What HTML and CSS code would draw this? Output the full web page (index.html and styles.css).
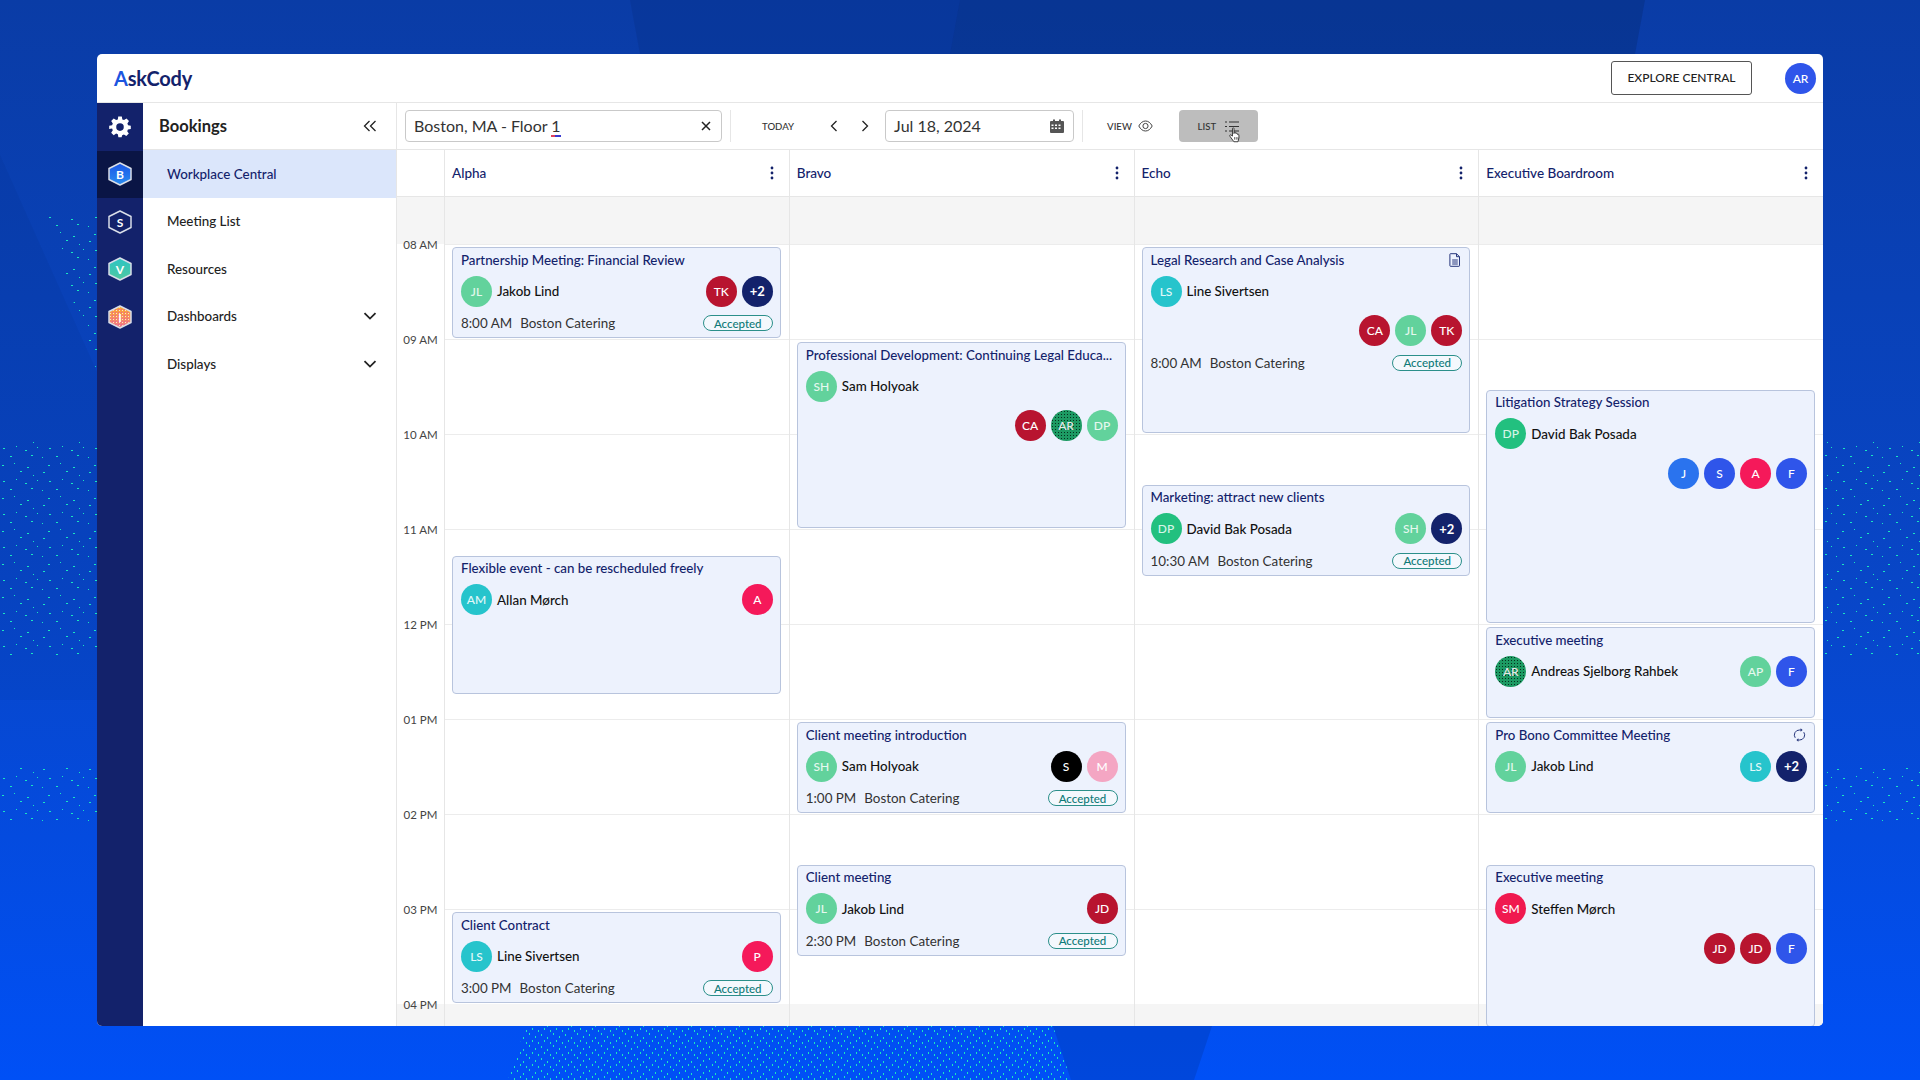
FILE: index.html
```html
<!DOCTYPE html>
<html lang="en">
<head>
    <meta charset="UTF-8">
    <meta name="viewport" content="width=device-width, initial-scale=1.0">
    <title>AskCody Workplace Central</title>
    <link rel="stylesheet" href="styles.css">
</head>
<body>

    <!-- Backdrop: faint polygons and dotted patches behind the window -->
    <svg class="backdrop" width="1920" height="1080" viewBox="0 0 1920 1080">
        <defs>
            <pattern id="dots" width="46" height="33" patternUnits="userSpaceOnUse">
                <g fill="#19e6c0">
                    <rect x="2" y="3" width="2" height="1"/><rect x="14" y="1" width="1" height="1"/>
                    <rect x="27" y="5" width="2" height="1"/>
                    <rect x="20" y="9" width="2" height="1"/>
                    <rect x="33" y="13" width="1" height="1"/><rect x="43" y="10" width="2" height="1"/>
                    <rect x="3" y="19" width="2" height="1"/><rect x="16" y="17" width="1" height="1"/>
                    <rect x="25" y="21" width="2" height="1"/><rect x="37" y="18" width="1" height="1"/>
                    <rect x="10" y="27" width="2" height="1"/>
                    <rect x="31" y="26" width="2" height="1"/><rect x="42" y="28" width="1" height="1"/>
                </g>
            </pattern>
            <pattern id="dotsDense" width="24" height="12" patternUnits="userSpaceOnUse">
                <g fill="#19e6c0">
                    <rect x="1" y="1" width="1" height="2"/><rect x="7" y="4" width="1" height="2"/>
                    <rect x="13" y="2" width="1" height="2"/><rect x="19" y="5" width="1" height="2"/>
                    <rect x="4" y="8" width="1" height="2"/><rect x="10" y="10" width="1" height="2"/>
                    <rect x="16" y="8" width="1" height="2"/><rect x="22" y="10" width="1" height="2"/>
                </g>
            </pattern>
        </defs>
        <polygon points="630,0 960,0 950,54 640,54" fill="#00163f" opacity="0.1"/>
        <polygon points="960,0 1645,0 1635,54 950,54" fill="#00163f" opacity="0.18"/>
        <polygon points="0,155 97,372 97,700 0,700" fill="#00163f" opacity="0.05"/>
        <polygon points="1053,1026 1212,1026 1194,1080 1071,1080" fill="#00163f" opacity="0.14"/>
        <polygon points="526,1026 1053,1026 1071,1080 508,1080" fill="url(#dotsDense)"/>
        <polygon points="45,217 97,217 97,372" fill="url(#dots)"/>
        <rect x="0" y="440" width="97" height="215" fill="url(#dots)"/>
        <rect x="0" y="768" width="97" height="55" fill="url(#dots)"/>
        <rect x="1823" y="440" width="97" height="215" fill="url(#dots)"/>
        <rect x="1823" y="768" width="97" height="55" fill="url(#dots)"/>
    </svg>

    <!-- Shared icons -->
    <svg class="icon-sprite" width="0" height="0">
        <symbol id="kebab" viewBox="0 0 4 14"><circle cx="2" cy="2" r="1.4"/><circle cx="2" cy="7" r="1.4"/><circle cx="2" cy="12" r="1.4"/></symbol>
        <symbol id="chevron-down" viewBox="0 0 14 8"><path d="M1.5 1.2 7 6.6l5.5-5.4" fill="none" stroke="currentColor" stroke-width="1.8"/></symbol>
    </svg>

    <div class="app">
        <header class="topbar">
            <div class="logo"><span class="logo-a">A</span>skCody</div>
            <div class="topbar-right">
                <div class="explore-btn">EXPLORE CENTRAL</div>
                <div class="av blue">AR</div>
            </div>
        </header>

        <div class="main">
            <nav class="rail">
                <div class="rail-item">
                    <svg width="24" height="24" viewBox="0 0 24 24"><path fill="#fff" fill-rule="evenodd" d="M10 1h4l.6 3.2 1.9.8 2.7-1.8 2.8 2.8-1.8 2.7.8 1.9L24 11.2v3.6l-3.2.6-.8 1.9 1.8 2.7-2.8 2.8-2.7-1.8-1.9.8L13.8 24h-3.6l-.6-3.2-1.9-.8-2.7 1.8-2.8-2.8 1.8-2.7-.8-1.9L0 14.8v-3.6l3.2-.6.8-1.9L2.200 6l2.800-2.800L7.700 5l1.900-.8zM12 8.600a4.200 4.200 0 1 0 0 8.400 4.200 4.200 0 0 0 0-8.400z" transform="translate(1.200 .6) scale(.9)"/></svg>
                </div>
                <div class="rail-item rail-active">
                    <svg width="26" height="26" viewBox="0 0 26 26">
                        <defs><linearGradient id="hexB" x1="0" y1="0" x2="0" y2="1"><stop offset="0" stop-color="#1a55e8"/><stop offset="1" stop-color="#2a8ef0"/></linearGradient></defs>
                        <polygon class="hex" points="13,2 24,7.500 24,18.500 13,24 2,18.500 2,7.500" fill="url(#hexB)"/>
                        <text x="13" y="17.500" class="hex-letter">B</text>
                    </svg>
                </div>
                <div class="rail-item">
                    <svg width="26" height="26" viewBox="0 0 26 26">
                        <polygon class="hex" points="13,2 24,7.500 24,18.500 13,24 2,18.500 2,7.500" fill="#13226b"/>
                        <text x="13" y="17.500" class="hex-letter">S</text>
                    </svg>
                </div>
                <div class="rail-item">
                    <svg width="26" height="26" viewBox="0 0 26 26">
                        <defs><linearGradient id="hexV" x1="0" y1="0" x2="0" y2="1"><stop offset="0" stop-color="#2cc4c4"/><stop offset="1" stop-color="#4fc9a0"/></linearGradient></defs>
                        <polygon class="hex" points="13,2 24,7.500 24,18.500 13,24 2,18.500 2,7.500" fill="url(#hexV)"/>
                        <text x="13" y="17.500" class="hex-letter">V</text>
                    </svg>
                </div>
                <div class="rail-item">
                    <svg width="26" height="26" viewBox="0 0 26 26">
                        <defs>
                            <linearGradient id="hexI" x1="0" y1="0" x2="0" y2="1"><stop offset="0" stop-color="#fba92c"/><stop offset="1" stop-color="#f2788c"/></linearGradient>
                            <pattern id="hexSpeck" width="3" height="3" patternUnits="userSpaceOnUse"><rect width="1" height="1" fill="#ffe3c4"/><rect x="2" y="2" width="1" height="1" fill="#ea5f9a"/></pattern>
                        </defs>
                        <polygon class="hex" points="13,2 24,7.500 24,18.500 13,24 2,18.500 2,7.500" fill="url(#hexI)"/>
                        <polygon points="13,3 23,8 23,18 13,23 3,18 3,8" fill="url(#hexSpeck)"/>
                        <text x="13" y="17.500" class="hex-letter">I</text>
                    </svg>
                </div>
            </nav>

            <aside class="side">
                <div class="side-head">
                    <span class="side-title">Bookings</span>
                    <svg class="collapse" width="14" height="12" viewBox="0 0 14 12"><path d="M6.500 1 1.500 6l5 5M12.500 1l-5 5 5 5" fill="none" stroke="#222" stroke-width="1.300"/></svg>
                </div>
                <div class="side-item side-active">Workplace Central</div>
                <div class="side-item">Meeting List</div>
                <div class="side-item">Resources</div>
                <div class="side-item">Dashboards <svg class="caret" width="14" height="8"><use href="#chevron-down"/></svg></div>
                <div class="side-item">Displays <svg class="caret" width="14" height="8"><use href="#chevron-down"/></svg></div>
            </aside>

            <section class="calendar">
                <div class="toolbar">
                    <div class="field search-field">
                        <span>Boston, MA - Floor <span class="spell">1</span></span>
                        <svg width="10" height="10" viewBox="0 0 10 10"><path d="M1 1l8 8M9 1 1 9" stroke="#222" stroke-width="1.500"/></svg>
                    </div>
                    <div class="divider"></div>
                    <span class="tool-label today">TODAY</span>
                    <svg class="arrow" width="8" height="12" viewBox="0 0 8 12"><path d="M6.500 1 1.500 6l5 5" fill="none" stroke="#222" stroke-width="1.300"/></svg>
                    <svg class="arrow arrow-next" width="8" height="12" viewBox="0 0 8 12"><path d="M1.500 1l5 5-5 5" fill="none" stroke="#222" stroke-width="1.300"/></svg>
                    <div class="field date-field">
                        <span>Jul 18, 2024</span>
                        <svg width="14" height="14" viewBox="0 0 14 14"><path fill="#555" fill-rule="evenodd" d="M1 2h2V.5h2V2h4V.5h2V2h2a1 1 0 0 1 1 1v10a1 1 0 0 1-1 1H1a1 1 0 0 1-1-1V3a1 1 0 0 1 1-1zm.5 3.500V7h2V5.500zm3.500 0V7h2V5.500zm3.500 0V7h2V5.500zM1.500 8.500V10h2V8.500zm3.500 0V10h2V8.500zm3.500 0V10h2V8.500z"/></svg>
                    </div>
                    <div class="divider"></div>
                    <span class="tool-label view">VIEW</span>
                    <svg class="eye" width="15" height="12" viewBox="0 0 15 12"><path d="M.8 6C2.500 2.800 4.800 1 7.500 1s5 1.800 6.700 5c-1.700 3.200-4 5-6.700 5S2.500 9.200.8 6z" fill="none" stroke="#444" stroke-width="1"/><circle cx="7.500" cy="6" r="2.600" fill="none" stroke="#444" stroke-width="1"/></svg>
                    <div class="list-btn">
                        <span class="tool-label">LIST</span>
                        <svg width="14" height="11" viewBox="0 0 14 11"><path d="M0 1h2M4 1h10M0 5.500h2M4 5.500h10M0 10h2M4 10h10" stroke="#333" stroke-width="1.200"/></svg>
                        <svg class="cursor" width="14" height="16" viewBox="0 0 15 19"><path d="M4.500 1.800c0-1 1.800-1 1.800 0v6l.3-1c.4-.8 1.700-.6 1.800.3l.2.7c.3-.8 1.600-.6 1.700.3l.2.8c.4-.6 1.500-.4 1.600.5.300 2 .2 4.200-.5 6l-.6 2.100H6.200L1.500 11c-.8-1 .2-2.200 1.300-1.500l1.700 1.300z" fill="#fff" stroke="#222" stroke-width="1"/><path d="M7 12v3M9 12v3M11 12v3" stroke="#222" stroke-width=".8"/></svg>
                    </div>
                </div>

                <div class="cal-head">
                    <div class="time-head"></div>
                    <div class="col-head"><span>Alpha</span><svg width="4" height="14"><use href="#kebab"/></svg></div>
                    <div class="col-head"><span>Bravo</span><svg width="4" height="14"><use href="#kebab"/></svg></div>
                    <div class="col-head"><span>Echo</span><svg width="4" height="14"><use href="#kebab"/></svg></div>
                    <div class="col-head"><span>Executive Boardroom</span><svg width="4" height="14"><use href="#kebab"/></svg></div>
                </div>

                <div class="cal-body">
                    <div class="times">
                        <div class="hour">08 AM</div>
                        <div class="hour">09 AM</div>
                        <div class="hour">10 AM</div>
                        <div class="hour">11 AM</div>
                        <div class="hour">12 PM</div>
                        <div class="hour">01 PM</div>
                        <div class="hour">02 PM</div>
                        <div class="hour">03 PM</div>
                        <div class="hour">04 PM</div>
                    </div>

                    <!-- Alpha -->
                    <div class="col">
                        <article class="event" style="grid-row: 3 / span 4">
                            <div class="event-title">Partnership Meeting: Financial Review</div>
                            <div class="event-row">
                                <div class="person"><div class="av green">JL</div><span class="name">Jakob Lind</span></div>
                                <div class="attendees"><div class="av red">TK</div><div class="av navy">+2</div></div>
                            </div>
                            <div class="meta"><span class="meta-time">8:00 AM</span><span>Boston Catering</span><span class="badge">Accepted</span></div>
                        </article>
                        <article class="event" style="grid-row: 16 / span 6">
                            <div class="event-title">Flexible event - can be rescheduled freely</div>
                            <div class="event-row">
                                <div class="person"><div class="av teal">AM</div><span class="name">Allan Mørch</span></div>
                                <div class="attendees"><div class="av rose">A</div></div>
                            </div>
                        </article>
                        <article class="event" style="grid-row: 31 / span 4">
                            <div class="event-title">Client Contract</div>
                            <div class="event-row">
                                <div class="person"><div class="av teal">LS</div><span class="name">Line Sivertsen</span></div>
                                <div class="attendees"><div class="av rose">P</div></div>
                            </div>
                            <div class="meta"><span class="meta-time">3:00 PM</span><span>Boston Catering</span><span class="badge">Accepted</span></div>
                        </article>
                    </div>

                    <!-- Bravo -->
                    <div class="col">
                        <article class="event" style="grid-row: 7 / span 8">
                            <div class="event-title">Professional Development: Continuing Legal Educa...</div>
                            <div class="event-row">
                                <div class="person"><div class="av green">SH</div><span class="name">Sam Holyoak</span></div>
                            </div>
                            <div class="attendees attendees-wrap"><div class="av red">CA</div><div class="av forest">AR</div><div class="av green">DP</div></div>
                        </article>
                        <article class="event" style="grid-row: 23 / span 4">
                            <div class="event-title">Client meeting introduction</div>
                            <div class="event-row">
                                <div class="person"><div class="av green">SH</div><span class="name">Sam Holyoak</span></div>
                                <div class="attendees"><div class="av black">S</div><div class="av pink">M</div></div>
                            </div>
                            <div class="meta"><span class="meta-time">1:00 PM</span><span>Boston Catering</span><span class="badge">Accepted</span></div>
                        </article>
                        <article class="event" style="grid-row: 29 / span 4">
                            <div class="event-title">Client meeting</div>
                            <div class="event-row">
                                <div class="person"><div class="av green">JL</div><span class="name">Jakob Lind</span></div>
                                <div class="attendees"><div class="av red">JD</div></div>
                            </div>
                            <div class="meta"><span class="meta-time">2:30 PM</span><span>Boston Catering</span><span class="badge">Accepted</span></div>
                        </article>
                    </div>

                    <!-- Echo -->
                    <div class="col">
                        <article class="event" style="grid-row: 3 / span 8">
                            <div class="event-title">Legal Research and Case Analysis
                                <svg class="title-icon" width="12" height="14" viewBox="0 0 12 14"><path d="M1.500.7h6l3 3v9a.6.6 0 0 1-.6.6H1.500a.6.6 0 0 1-.6-.6V1.300a.6.6 0 0 1 .6-.6zM7.500.7v3h3M3.200 7h5.600M3.200 9h5.600M3.200 11h5.600" fill="none" stroke="#26367c" stroke-width="1"/></svg>
                            </div>
                            <div class="event-row">
                                <div class="person"><div class="av teal">LS</div><span class="name">Line Sivertsen</span></div>
                            </div>
                            <div class="attendees attendees-wrap"><div class="av red">CA</div><div class="av green">JL</div><div class="av red">TK</div></div>
                            <div class="meta"><span class="meta-time">8:00 AM</span><span>Boston Catering</span><span class="badge">Accepted</span></div>
                        </article>
                        <article class="event" style="grid-row: 13 / span 4">
                            <div class="event-title">Marketing: attract new clients</div>
                            <div class="event-row">
                                <div class="person"><div class="av emerald">DP</div><span class="name">David Bak Posada</span></div>
                                <div class="attendees"><div class="av green">SH</div><div class="av navy">+2</div></div>
                            </div>
                            <div class="meta"><span class="meta-time">10:30 AM</span><span>Boston Catering</span><span class="badge">Accepted</span></div>
                        </article>
                    </div>

                    <!-- Executive Boardroom -->
                    <div class="col">
                        <article class="event" style="grid-row: 9 / span 10">
                            <div class="event-title">Litigation Strategy Session</div>
                            <div class="event-row">
                                <div class="person"><div class="av emerald">DP</div><span class="name">David Bak Posada</span></div>
                            </div>
                            <div class="attendees attendees-wrap"><div class="av sky">J</div><div class="av blue">S</div><div class="av rose">A</div><div class="av blue">F</div></div>
                        </article>
                        <article class="event" style="grid-row: 19 / span 4">
                            <div class="event-title">Executive meeting</div>
                            <div class="event-row">
                                <div class="person"><div class="av forest">AR</div><span class="name">Andreas Sjelborg Rahbek</span></div>
                                <div class="attendees"><div class="av green">AP</div><div class="av blue">F</div></div>
                            </div>
                        </article>
                        <article class="event" style="grid-row: 23 / span 4">
                            <div class="event-title">Pro Bono Committee Meeting
                                <svg class="title-icon" width="13" height="14" viewBox="0 0 13 14"><path d="M2.200 9.800A5 5 0 0 1 6.500 2h1.600M10.800 4.200A5 5 0 0 1 6.500 12H4.900" fill="none" stroke="#26367c" stroke-width="1"/><path d="M7.600.3 9.600 2 7.600 3.700zM5.400 10.300 3.400 12l2 1.700z" fill="#26367c"/></svg>
                            </div>
                            <div class="event-row">
                                <div class="person"><div class="av green">JL</div><span class="name">Jakob Lind</span></div>
                                <div class="attendees"><div class="av teal">LS</div><div class="av navy">+2</div></div>
                            </div>
                        </article>
                        <article class="event" style="grid-row: 29 / span 8">
                            <div class="event-title">Executive meeting</div>
                            <div class="event-row">
                                <div class="person"><div class="av crimson">SM</div><span class="name">Steffen Mørch</span></div>
                            </div>
                            <div class="attendees attendees-wrap"><div class="av red">JD</div><div class="av red">JD</div><div class="av blue">F</div></div>
                        </article>
                    </div>
                </div>
            </section>
        </div>
    </div>

</body>
</html>
```

FILE: styles.css
```css
/* General Styles */
body {
    font-family: 'Lato', 'Liberation Sans', sans-serif;
    margin: 0;
    width: 1920px;
    height: 1080px;
    box-sizing: border-box;
    padding: 54px 97px;
    overflow: hidden;
    background: linear-gradient(180deg, #0a3ca6 0%, #0846c8 55%, #0050f6 100%);
    color: #111;
}

.backdrop {
    position: absolute;
    top: 0;
    left: 0;
}

.icon-sprite {
    position: absolute;
}

/* Window */
.app {
    position: relative;
    height: 972px;
    background: #fff;
    border-radius: 5px;
    display: flex;
    flex-direction: column;
    overflow: hidden;
}

/* Top Bar */
.topbar {
    height: 48px;
    flex-shrink: 0;
    display: flex;
    align-items: center;
    justify-content: space-between;
    padding: 0 7px 0 17px;
    border-bottom: 1px solid #e6e6e6;
}

.logo {
    font-size: 20px;
    font-weight: 700;
    color: #13226b;
    letter-spacing: -0.2px;
}

.logo-a {
    color: #1c55e0;
}

.topbar-right {
    display: flex;
    align-items: center;
    gap: 33px;
}

.explore-btn {
    width: 141px;
    height: 34px;
    box-sizing: border-box;
    border: 1px solid #555;
    border-radius: 3px;
    padding-bottom: 1px;
    display: flex;
    align-items: center;
    justify-content: center;
    font-size: 12px;
    font-weight: 500;
    color: #222;
}

/* Main Area */
.main {
    flex: 1;
    display: flex;
    min-height: 0;
}

.rail {
    width: 46px;
    flex-shrink: 0;
    background: #13226b;
    display: flex;
    flex-direction: column;
}

.rail-item {
    height: 47.5px;
    display: flex;
    align-items: center;
    justify-content: center;
}

.rail-active {
    background: #0a1545;
}

.hex {
    stroke: #d8dde8;
    stroke-width: 1.5;
    stroke-linejoin: round;
}

.hex-letter {
    font-size: 12px;
    font-weight: 700;
    fill: #fff;
    text-anchor: middle;
}

/* Side Panel */
.side {
    width: 253px;
    flex-shrink: 0;
    border-right: 1px solid #e6e6e6;
}

.side-head {
    height: 46px;
    border-bottom: 1px solid #e6e6e6;
    display: flex;
    align-items: center;
    justify-content: space-between;
    padding: 0 19px 0 16px;
}

.side-title {
    font-size: 16.5px;
    font-weight: 700;
    color: #222;
    padding-bottom: 1px;
}

.side-item {
    height: 47.5px;
    padding: 0 19px 0 24px;
    display: flex;
    align-items: center;
    justify-content: space-between;
    font-size: 13.4px;
    font-weight: 500;
    color: #222;
}

.side-active {
    background: #dbe6fb;
    color: #13226b;
}

.caret {
    color: #222;
}

/* Calendar */
.calendar {
    flex: 1;
    min-width: 0;
    display: flex;
    flex-direction: column;
}

.toolbar {
    height: 46px;
    flex-shrink: 0;
    border-bottom: 1px solid #e6e6e6;
    display: flex;
    align-items: center;
    padding-left: 8px;
}

.field {
    height: 32px;
    box-sizing: border-box;
    border: 1px solid #c9c9c9;
    border-radius: 4px;
    padding-bottom: 1px;
    display: flex;
    align-items: center;
    justify-content: space-between;
    font-size: 16px;
    color: #333;
}

.search-field {
    width: 317px;
    padding-left: 8px;
    padding-right: 10px;
}

.date-field {
    width: 189px;
    padding-left: 8px;
    padding-right: 9px;
}

.spell {
    border-bottom: 2px solid;
    border-image: linear-gradient(90deg, #e0405a 40%, #3a3ad0 40%) 1;
}

.divider {
    width: 1px;
    height: 32px;
    background: #e6e6e6;
    margin: 0 8px;
}

.tool-label {
    font-size: 9.6px;
    font-weight: 500;
    color: #333;
}

.today {
    margin-left: 23px;
}

.arrow {
    margin-left: 36px;
}

.arrow-next {
    margin-left: 23px;
    margin-right: 16px;
}

.view {
    margin-left: 16px;
}

.eye {
    margin-left: 6px;
}

.list-btn {
    position: relative;
    width: 79px;
    height: 32px;
    margin-left: 26px;
    background: #bdbdbd;
    border-radius: 4px;
    display: flex;
    align-items: center;
    justify-content: center;
    gap: 9px;
}

.cursor {
    position: absolute;
    left: 49px;
    top: 17px;
}

/* Column Headers */
.cal-head {
    height: 47px;
    flex-shrink: 0;
    display: flex;
    border-bottom: 1px solid #e6e6e6;
    box-sizing: border-box;
}

.time-head {
    width: 47px;
    flex-shrink: 0;
}

.col-head {
    flex: 1;
    border-left: 1px solid #e6e6e6;
    padding: 0 15px 0 7px;
    display: flex;
    align-items: center;
    justify-content: space-between;
    font-size: 13.5px;
    font-weight: 500;
    color: #13226b;
    fill: #13226b;
    min-width: 0;
}

/* Time Grid */
.cal-body {
    flex: 1;
    min-height: 0;
    display: flex;
    overflow: hidden;
}

.times {
    width: 47px;
    flex-shrink: 0;
    background: linear-gradient(180deg, #f5f5f5 47.5px, transparent 47.5px, transparent 807.5px, #f5f5f5 807.5px);
}

.hour {
    height: 95px;
    display: flex;
    align-items: center;
    justify-content: center;
    font-size: 11.5px;
    color: #444;
}

.col {
    flex: 1;
    min-width: 0;
    border-left: 1px solid #e6e6e6;
    display: grid;
    grid-template-rows: repeat(35, 23.75px);
    grid-template-columns: minmax(0, 1fr);
    background-image:
        linear-gradient(180deg, #f5f5f5 47.5px, transparent 47.5px, transparent 807.5px, #f5f5f5 807.5px),
        linear-gradient(180deg, #ececec 1px, transparent 1px);
    background-size: 100% 100%, 100% 95px;
    background-position: 0 0, 0 47px;
}

/* Event Cards */
.event {
    margin: 2.5px 8px 1.5px 7px;
    padding: 2.5px 7px 0 8px;
    background: #edf2fd;
    border: 1px solid #b8c4dd;
    border-radius: 4px;
    overflow: hidden;
    min-height: 0;
}

.event-title {
    height: 18px;
    line-height: 18px;
    display: flex;
    align-items: center;
    justify-content: space-between;
    font-size: 13.3px;
    font-weight: 500;
    color: #13226b;
    white-space: nowrap;
}

.title-icon {
    margin-right: 1px;
    flex-shrink: 0;
}

.event-row {
    margin-top: 7px;
    display: flex;
    align-items: center;
    justify-content: space-between;
}

.person {
    display: flex;
    align-items: center;
    gap: 5px;
}

.name {
    font-size: 13.4px;
    font-weight: 500;
    color: #111;
}

.attendees {
    display: flex;
    gap: 5px;
}

.attendees-wrap {
    margin-top: 8.5px;
    justify-content: flex-end;
}

.meta {
    margin-top: 7.5px;
    height: 18px;
    display: flex;
    align-items: center;
    font-size: 13.4px;
    color: #333;
}

.meta-time {
    margin-right: 8px;
}

.badge {
    margin-left: auto;
    width: 70px;
    height: 16px;
    box-sizing: border-box;
    border: 1px solid #2b8f8a;
    border-radius: 8px;
    background: #f4f8fd;
    display: flex;
    align-items: center;
    justify-content: center;
    font-size: 11.5px;
    font-weight: 500;
    color: #0f7a78;
}

/* Avatars */
.av {
    width: 31px;
    height: 31px;
    border-radius: 50%;
    flex-shrink: 0;
    display: flex;
    align-items: center;
    justify-content: center;
    font-size: 12px;
    font-weight: 500;
    color: #fff;
}

.green { background: #62d29c; color: #e6f8ef; }
.emerald { background: #22c07f; color: #d6f5e7; }
.forest {
    background: #1d9a63 radial-gradient(#06301e 38%, transparent 42%) 0 0 / 3px 3px;
    color: #e8e8e8;
}
.teal { background: #26c4cc; color: #e2f8f9; }
.red { background: #b8142f; }
.rose { background: #f5195a; }
.crimson { background: #f0194f; }
.pink { background: #f4a6c3; }
.navy { background: #13226b; font-size: 13px; font-weight: 700; }
.blue { background: #2f55ea; }
.sky { background: #2a73ee; }
.black { background: #000; }
```
